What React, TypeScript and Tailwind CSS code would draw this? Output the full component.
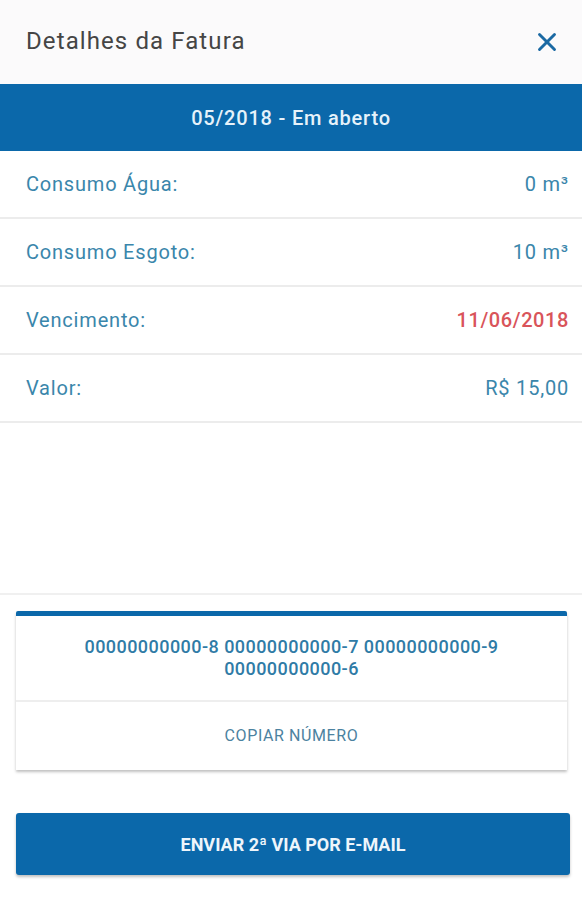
import { X } from "lucide-react";

const rows = [
  { label: "Consumo Água:", value: "0 m³", red: false },
  { label: "Consumo Esgoto:", value: "10 m³", red: false },
  { label: "Vencimento:", value: "11/06/2018", red: true },
  { label: "Valor:", value: "R$ 15,00", red: false },
];

export default function App() {
  return (
    <div className="w-[582px] h-[900px] bg-white flex flex-col font-['Roboto',sans-serif]">
      {/* header */}
      <div className="h-[84px] bg-[#fbfafb] flex items-center justify-between pl-[26px] pr-[20px]">
        <h1 className="text-[24px] tracking-[1.1px] text-[#454545] -mt-[2px]">Detalhes da Fatura</h1>
        <X className="text-[#1b69a3]" size={30} strokeWidth={2.3} />
      </div>

      <div className="h-[67px] bg-[#0b68aa] flex items-center justify-center">
        <span className="text-[20px] tracking-[0.8px] font-medium text-[#e6f2fa]">05/2018 - Em aberto</span>
      </div>

      <div className="flex flex-col">
        {rows.map((r) => (
          <div
            key={r.label}
            className="h-[68px] flex items-center justify-between pl-[26px] pr-[13px] border-b-2 border-[#ececec]"
          >
            <span className="text-[20px] tracking-[0.8px] text-[#3a86ab]">{r.label}</span>
            <span
              className={
                r.red
                  ? "text-[20px] tracking-[0.6px] font-medium text-[#d9545a]"
                  : "text-[20px] tracking-[0.8px] text-[#3a86ab]"
              }
            >
              {r.value}
            </span>
          </div>
        ))}
      </div>

      <div className="h-[172px] border-b-2 border-[#f0f0f0]"></div>

      <div className="px-[16px] pt-[16px]">
        <div className="w-[551px] bg-white border-t-[5px] border-[#0b68aa] rounded-t-[2px] shadow-[0_2px_3px_rgba(0,0,0,0.25)]">
          <div className="h-[86px] flex items-center justify-center border-b-2 border-[#eeeeee] px-[30px]">
            <p className="text-center text-[18px] tracking-[0.45px] font-medium leading-[22px] text-[#2f7ba6]">
              00000000000-8 00000000000-7 00000000000-9 00000000000-6
            </p>
          </div>
          <div className="h-[68px] flex items-center justify-center">
            <span className="text-[16px] tracking-[0.6px] text-[#4c82a0]">COPIAR NÚMERO</span>
          </div>
        </div>

        <button className="mt-[43px] w-[554px] h-[62px] bg-[#0b68aa] rounded-[3px] shadow-[0_2px_3px_rgba(0,0,0,0.25)] flex items-center justify-center">
          <span className="text-[18px] font-bold text-[#eef5fb]">ENVIAR 2ª VIA POR E-MAIL</span>
        </button>
      </div>
    </div>
  );
}
